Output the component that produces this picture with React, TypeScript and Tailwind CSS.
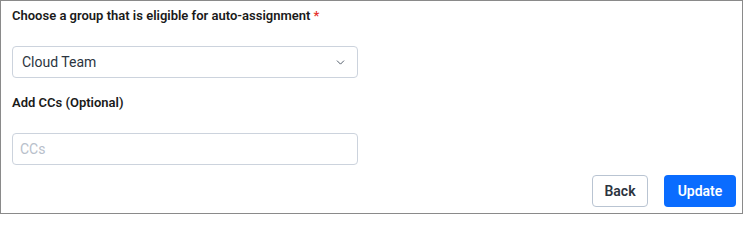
import { ChevronDown } from "lucide-react";

export default function App() {
  return (
    <div
      className="w-[743px] h-[214px] border border-[#8a8a8a] bg-white flex flex-col"
      style={{ fontFamily: "Roboto, 'Liberation Sans', sans-serif" }}
    >
      <div className="px-[11px] pt-[6px] flex flex-col">
        <label className="text-[13px] font-semibold text-[#1a1a1a] leading-[18px]">
          Choose a group that is eligible for auto-assignment <span className="text-[#e5322d]">*</span>
        </label>
        <div className="mt-[21px] w-[346px] h-[32px] border border-[#ccd3dd] rounded-[4px] flex items-center justify-between pl-[9px] pr-[10px]">
          <span className="text-[14px] text-[#2b3440]">Cloud Team</span>
          <ChevronDown className="w-[13px] h-[13px] text-[#3a4656]" strokeWidth={1.6} />
        </div>
        <label className="mt-[16px] text-[13px] font-semibold text-[#1a1a1a] leading-[18px]">
          Add CCs (Optional)
        </label>
        <input
          placeholder="CCs"
          className="mt-[21px] w-[346px] h-[32px] border border-[#ccd3dd] rounded-[4px] px-[7px] text-[14px] placeholder:text-[#b8c0cb] outline-none"
        />
      </div>
      <div className="mt-auto flex justify-end gap-[16px] pr-[6px] pb-[6px]">
        <button className="w-[56px] h-[32px] border border-[#b9c4d2] rounded-[4px] text-[14px] font-semibold text-[#2b3440] bg-white">
          Back
        </button>
        <button className="w-[72px] h-[32px] rounded-[4px] text-[14px] font-semibold text-white bg-[#0a6cff]">
          Update
        </button>
      </div>
    </div>
  );
}
